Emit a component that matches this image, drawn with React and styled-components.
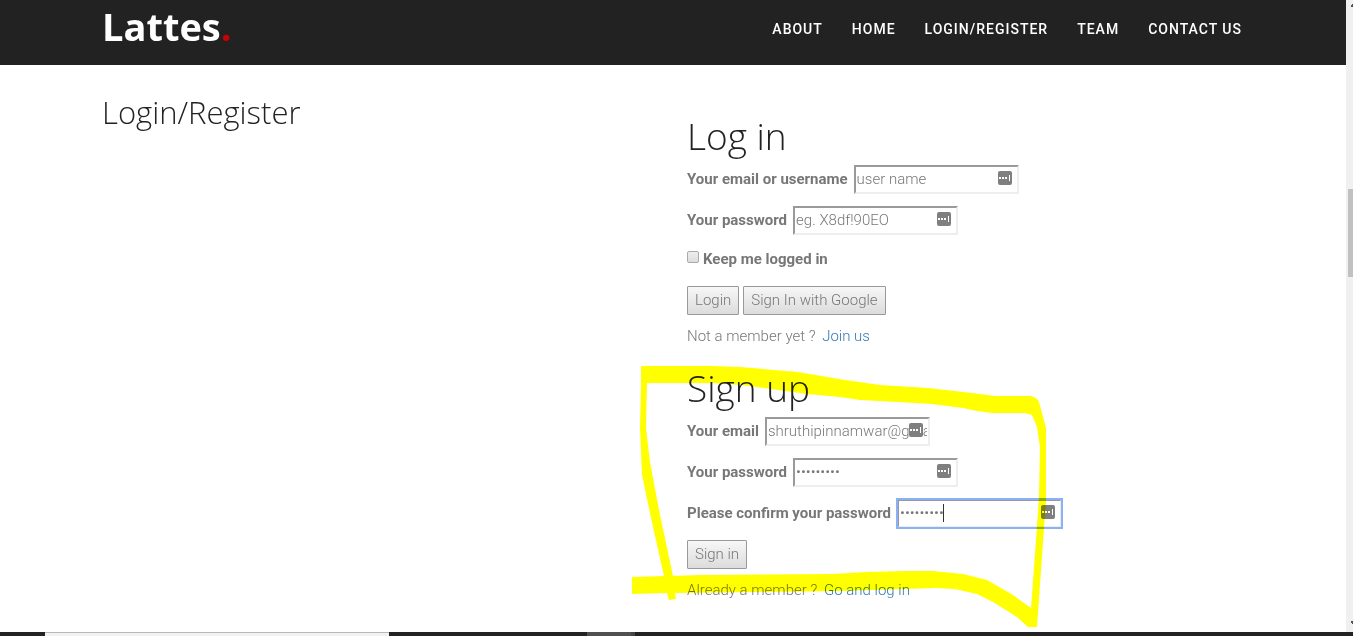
import React from 'react';
import styled, { createGlobalStyle } from 'styled-components';

const GlobalStyle = createGlobalStyle`
  *, *::before, *::after { box-sizing: border-box; }
  body {
    margin: 0;
    background: #fff;
    color: #777;
    font: 300 15px/26px Roboto, "Liberation Sans", sans-serif;
  }
`;

const Shell = styled.div`
  display: grid;
  grid-template-columns: 1fr 7px;
  grid-template-rows: 1fr auto;
  min-height: 100vh;
`;

const Page = styled.div`
  min-width: 0;
`;

const TopBar = styled.header`
  background: #222;
  padding-right: 2px;
`;

const Container = styled.div`
  max-width: 1170px;
  margin: 0 auto;
  padding: 0 15px;
`;

const BarContent = styled(Container)`
  display: flex;
  justify-content: space-between;
  align-items: flex-start;
  height: 65px;
`;

const Logo = styled.a`
  padding-top: 2px;
  color: #fff;
  font: 700 38px/48px "Open Sans", sans-serif;
  text-decoration: none;
`;

const LogoDot = styled.span`
  color: #c00;
`;

const Nav = styled.nav`
  display: flex;
  gap: 29px;
  padding-top: 16px;
`;

const NavLink = styled.a`
  color: #fff;
  font-size: 14px;
  font-weight: 500;
  letter-spacing: 1px;
  text-decoration: none;
`;

const Main = styled.main`
  padding-right: 2px;
`;

const Columns = styled(Container)`
  display: grid;
  grid-template-columns: 1fr 1fr;
  column-gap: 30px;
`;

const PageTitle = styled.h2`
  margin: 28px 0 0;
  color: #222;
  font: 300 31px/38px "Open Sans", sans-serif;
`;

const Forms = styled.div`
  display: grid;
  gap: 20px;
  padding-top: 52px;
`;

const Form = styled.form`
  position: relative;
  display: grid;
  gap: 8px;
`;

const FormTitle = styled.h1`
  margin: 0;
  padding-bottom: 2px;
  color: #222;
  font: 300 37px/38px "Open Sans", sans-serif;
`;

const Fields = styled.div`
  display: grid;
  gap: 12px;
`;

const Row = styled.div`
  display: flex;
  align-items: flex-start;
  gap: 4px;
  height: 29px;
`;

const FieldRow = styled(Row)`
  gap: 6px;
`;

const CheckRow = styled(Row)`
  height: 27px;
  padding-top: 4px;
`;

const Label = styled.label`
  font-weight: 700;
  line-height: ${(p) => (p.$compact ? '16px' : '28px')};
`;

const InputWrap = styled.div`
  position: relative;
  width: 165px;
`;

const Input = styled.input`
  display: block;
  width: 100%;
  height: 29px;
  padding: 0 1px 2px;
  border: 2px solid;
  border-color: #9a9a9a #eee #eee #9a9a9a;
  border-radius: 0;
  background: #fff;
  color: #777;
  font: inherit;
  outline: ${(p) => (p.$active ? '2px solid #8ab0f5' : 'none')};
  outline-offset: -1px;

  &::placeholder { color: #777; }
`;

const Badge = styled.svg`
  position: absolute;
  top: 6px;
  right: 7px;
  width: 14px;
  height: 14px;
`;

const Caret = styled.span`
  position: absolute;
  top: 5px;
  left: 46px;
  width: 1px;
  height: 18px;
  background: #333;
`;

const Checkbox = styled.input`
  appearance: none;
  width: 12px;
  height: 12px;
  margin: 0;
  border: 1px solid #aaa;
  border-radius: 2px;
  background: linear-gradient(#eee, #ddd);
`;

const Button = styled.button`
  height: 29px;
  padding: 0 7px 2px;
  border: 1px solid #999;
  border-radius: 1px;
  background: linear-gradient(#f7f7f7, #dcdcdc);
  color: #777;
  font: inherit;
`;

const Note = styled.p`
  margin: 0;
`;

const Link = styled.a`
  margin-left: 3px;
  color: #337ab7;
  text-decoration: none;
`;

const Marker = styled.svg`
  position: absolute;
  left: -62px;
  top: -14px;
  width: 440px;
  height: 280px;
  fill: #ff0;
  mix-blend-mode: multiply;
  pointer-events: none;
`;

const ScrollTrack = styled.div`
  display: flex;
  flex-direction: column;
  justify-content: space-between;
  align-items: flex-end;
  padding: 4px 0 8px;
  background: #f0f0f0;
`;

const ScrollArrow = styled.svg`
  width: 2px;
  height: 3px;
  fill: #505050;
`;

const ScrollThumb = styled.div`
  width: 5px;
  height: 88px;
  margin: 182px 0 auto;
  background: #c1c1c1;
`;

const TaskStrip = styled.footer`
  grid-column: 1 / -1;
  display: flex;
  height: 4px;
  background: #222;
`;

const TaskSearch = styled.div`
  width: 344px;
  margin-left: 45px;
  border-top: 1px solid #b8b8b8;
  background: #f2f2f2;
`;

const TaskApp = styled.div`
  width: 48px;
  margin-left: 198px;
  border-right: 4px solid #444;
  background: #505050;
`;

function Field({ id, label, active, caret, ...rest }) {
  return (
    <FieldRow>
      <Label htmlFor={id}>{label}</Label>
      <InputWrap>
        <Input id={id} $active={active} {...rest} />
        {caret && <Caret />}
        <Badge viewBox="0 0 14 14" aria-hidden="true">
          <rect width="14" height="14" rx="2" fill="#7f7f7f" />
          <path d="M1 6h2v2H1zM4 6h2v2H4zM7 6h2v2H7zM11 4h1v6h-1z" fill="#fff" />
        </Badge>
      </InputWrap>
    </FieldRow>
  );
}

const NAV = ['ABOUT', 'HOME', 'LOGIN/REGISTER', 'TEAM', 'CONTACT US'];

export default function App() {
  return (
    <>
      <GlobalStyle />
      <Shell>
        <Page>
          <TopBar>
            <BarContent>
              <Logo href="#top">Lattes<LogoDot>.</LogoDot></Logo>
              <Nav>
                {NAV.map((item) => (
                  <NavLink href="#" key={item}>{item}</NavLink>
                ))}
              </Nav>
            </BarContent>
          </TopBar>
          <Main>
            <Columns>
              <PageTitle>Login/Register</PageTitle>
              <Forms>
                <Form>
                  <FormTitle>Log in</FormTitle>
                  <Fields>
                    <Field id="login-name" label="Your email or username" type="text" placeholder="user name" />
                    <Field id="login-password" label="Your password" type="password" placeholder="eg. X8df!90EO" />
                    <CheckRow>
                      <Checkbox type="checkbox" id="keep" />
                      <Label htmlFor="keep" $compact>Keep me logged in</Label>
                    </CheckRow>
                    <Row>
                      <Button type="button">Login</Button>
                      <Button type="button">Sign In with Google</Button>
                    </Row>
                  </Fields>
                  <Note>Not a member yet ? <Link href="#signup">Join us</Link></Note>
                </Form>
                <Form id="signup">
                  <FormTitle>Sign up</FormTitle>
                  <Fields>
                    <Field id="signup-email" label="Your email" type="text" defaultValue="shruthipinnamwar@gmail.com" />
                    <Field id="signup-password" label="Your password" type="password" defaultValue="abcdefghi" />
                    <Field id="signup-confirm" label="Please confirm your password" type="password" defaultValue="abcdefghi" active caret />
                    <Row>
                      <Button type="button">Sign in</Button>
                    </Row>
                  </Fields>
                  <Note>Already a member ? <Link href="#login">Go and log in</Link></Note>
                  <Marker viewBox="625 355 440 280" aria-hidden="true">
                    <path d="M641 366H713L740 367L798 372L845 380L880 385L928 388L972 393L995 396H1030Q1037 397 1039 402L1046 428V500L1037 627H1028L1017 617L993 602L977 594L955 589L935 588L840 591L753 592L675 593L676 599L669 600L667 593L632 594V577L664 576L653 527L642 475L640 428L641 382ZM647 383L646 428L650 462L660 515L673 576L700 575L832 574L867 572L905 571H933L963 574L987 580L1013 595L1031 608L1036 540L1039 497L1040 447L1037 427L1032 415L1025 413H992L977 411L963 408L932 404L898 402L860 400L840 397L807 394L742 385L713 383Z" fillRule="evenodd" />
                  </Marker>
                </Form>
              </Forms>
            </Columns>
          </Main>
        </Page>
        <ScrollTrack>
          <ScrollArrow viewBox="0 0 2 3"><path d="M1 0h1v3H0V1h1z" /></ScrollArrow>
          <ScrollThumb />
          <ScrollArrow viewBox="0 0 2 3"><path d="M0 0h2v3H1V2H0z" /></ScrollArrow>
        </ScrollTrack>
        <TaskStrip>
          <TaskSearch />
          <TaskApp />
        </TaskStrip>
      </Shell>
    </>
  );
}
